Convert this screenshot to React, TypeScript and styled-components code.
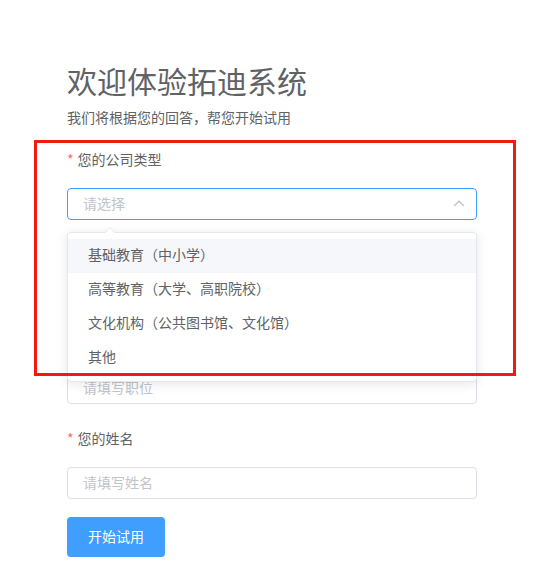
import styled, { createGlobalStyle } from 'styled-components';

const GlobalStyle = createGlobalStyle`
  html, body {
    margin: 0;
    padding: 0;
    background: #ffffff;
  }
  body {
    font-family: "Noto Sans CJK SC", "Liberation Sans", sans-serif;
    -webkit-font-smoothing: antialiased;
  }
`;

const companyTypes = [
  '基础教育（中小学）',
  '高等教育（大学、高职院校）',
  '文化机构（公共图书馆、文化馆）',
  '其他',
];

function ChevronUp() {
  return (
    <svg width="12" height="7" viewBox="0 0 12 7" fill="none">
      <polyline points="1,6 6,1.2 11,6" stroke="#c0c4cc" strokeWidth="1.3" />
    </svg>
  );
}

export default function App() {
  return (
    <Page>
      <GlobalStyle />
      <Content>
        <Title>欢迎体验拓迪系统</Title>
        <Subtitle>我们将根据您的回答，帮您开始试用</Subtitle>
        <Form>
          <FormItem $space={9}>
            <Label>
              <Star>*</Star>您的公司类型
            </Label>
            <SelectWrap>
              <Input $focused>
                <Placeholder>请选择</Placeholder>
                <ChevronUp />
              </Input>
              <Dropdown>
                <Caret />
                {companyTypes.map((type, i) => (
                  <Option key={type} $hover={i === 0}>
                    {type}
                  </Option>
                ))}
              </Dropdown>
            </SelectWrap>
          </FormItem>
          <FormItem>
            <Label>
              <Star>*</Star>您的单位名称
            </Label>
            <Input>
              <Placeholder>请填写单位名称</Placeholder>
            </Input>
          </FormItem>
          <FormItem>
            <Label>
              <Star>*</Star>您的职位
            </Label>
            <Input>
              <Placeholder>请填写职位</Placeholder>
            </Input>
          </FormItem>
          <FormItem $space={18}>
            <Label>
              <Star>*</Star>您的姓名
            </Label>
            <Input>
              <Placeholder>请填写姓名</Placeholder>
            </Input>
          </FormItem>
          <SubmitButton>开始试用</SubmitButton>
        </Form>
      </Content>
      <Highlight />
    </Page>
  );
}

const Page = styled.div`
  position: relative;
  width: 542px;
  min-height: 586px;
  background: #fff;
`;

const Content = styled.div`
  width: 410px;
  padding: 60px 0 0 67px;
  display: flex;
  flex-direction: column;
`;

const Title = styled.h1`
  margin: 0;
  font-size: 30px;
  line-height: 40px;
  font-weight: 400;
  color: #606266;
`;

const Subtitle = styled.p`
  margin: 7px 0 13px;
  font-size: 14px;
  line-height: 20px;
  color: #606266;
`;

const Form = styled.div`
  display: flex;
  flex-direction: column;
`;

const FormItem = styled.div<{ $space?: number }>`
  display: flex;
  flex-direction: column;
  gap: 8px;
  margin-bottom: ${({ $space }) => ($space ?? 15)}px;
`;

const Label = styled.div`
  font-size: 14px;
  line-height: 38px;
  height: 40px;
  color: #606266;
`;

const Star = styled.span`
  color: #f56c6c;
  margin-right: 4px;
`;

const SelectWrap = styled.div`
  position: relative;
`;

const Input = styled.div<{ $focused?: boolean }>`
  box-sizing: border-box;
  height: 32px;
  display: flex;
  align-items: center;
  justify-content: space-between;
  padding: 0 11px 2px 15px;
  border: 1px solid ${({ $focused }) => ($focused ? '#409eff' : '#dcdfe6')};
  border-radius: 4px;
  background: #fff;
`;

const Placeholder = styled.span`
  font-size: 14px;
  line-height: 20px;
  color: #c0c4cc;
`;

const Dropdown = styled.div`
  position: absolute;
  z-index: 5;
  top: 44px;
  left: 0;
  right: 0;
  box-sizing: border-box;
  padding: 6px 0;
  background: #fff;
  border: 1px solid #e4e7ed;
  border-radius: 4px;
  box-shadow: 0 2px 12px 0 rgba(0, 0, 0, 0.1);
`;

const Caret = styled.div`
  position: absolute;
  top: -6px;
  left: 36px;
  width: 0;
  height: 0;
  border-left: 6px solid transparent;
  border-right: 6px solid transparent;
  border-bottom: 6px solid #e4e7ed;

  &::after {
    content: '';
    position: absolute;
    top: 1px;
    left: -6px;
    border-left: 6px solid transparent;
    border-right: 6px solid transparent;
    border-bottom: 6px solid #fff;
  }
`;

const Option = styled.div<{ $hover?: boolean }>`
  box-sizing: border-box;
  height: 34px;
  line-height: 31px;
  padding: 0 20px;
  font-size: 14px;
  color: #606266;
  background: ${({ $hover }) => ($hover ? '#f5f7fa' : '#fff')};
  white-space: nowrap;
`;

const SubmitButton = styled.button`
  align-self: flex-start;
  width: 98px;
  height: 40px;
  padding: 0 0 2px;
  border: none;
  border-radius: 4px;
  background: #409eff;
  color: #fff;
  font-family: inherit;
  font-size: 14px;
  cursor: pointer;
`;

const Highlight = styled.div`
  position: absolute;
  z-index: 10;
  left: 34px;
  top: 140px;
  width: 482px;
  height: 236px;
  box-sizing: border-box;
  border: 3px solid #f01a10;
  pointer-events: none;
`;
